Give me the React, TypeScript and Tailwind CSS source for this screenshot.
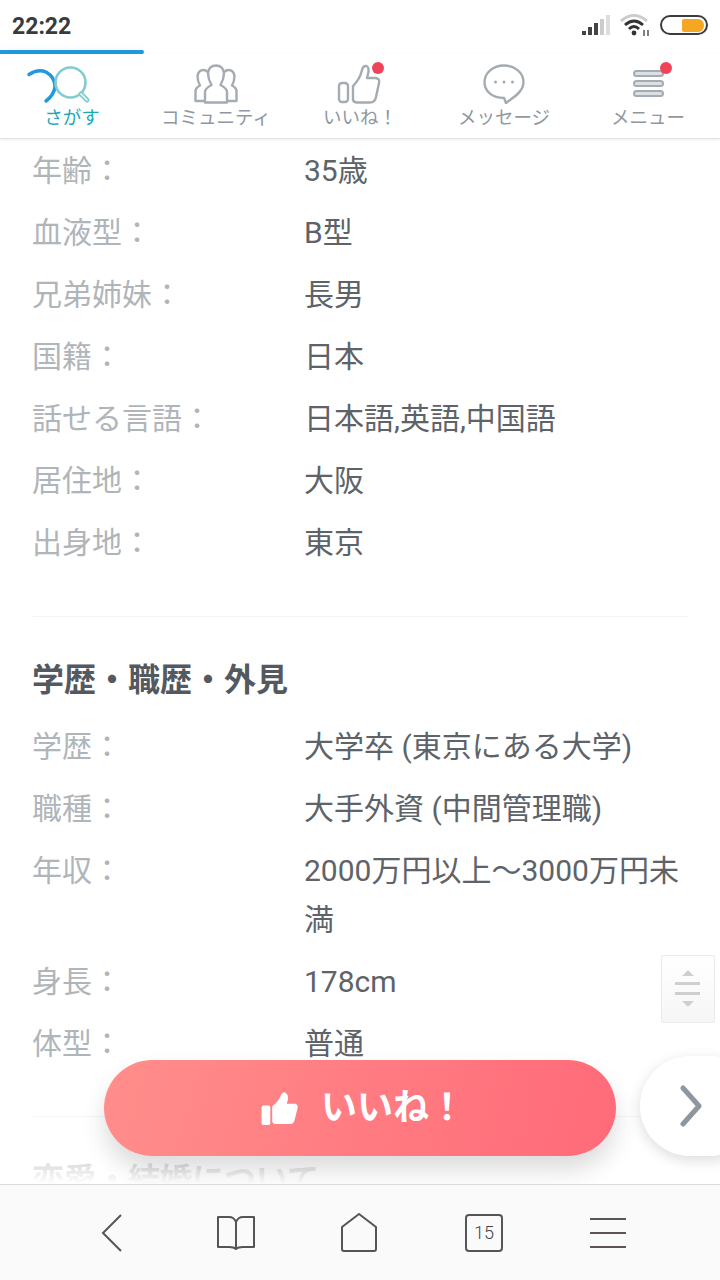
const font = { fontFamily: 'Roboto, "Noto Sans CJK JP", sans-serif' };

function Row({ label, value }: { label: string; value: string }) {
  return (
    <div className="flex mb-[13px] text-[30px] leading-[49px]">
      <div className="w-[272px] shrink-0 text-[#b0b5ba]">{label}</div>
      <div className="flex-1 text-[#5d6368]">{value}</div>
    </div>
  );
}

function NavItem({ icon, label, active }: { icon: React.ReactNode; label: string; active?: boolean }) {
  return (
    <div className="flex-1 relative flex flex-col items-center">
      <div className="h-[50px] flex items-end justify-center">{icon}</div>
      <div className={`text-[18.5px] leading-[26px] pt-[1px] whitespace-nowrap ${active ? 'text-[#1aa9b8]' : 'text-[#9097a0]'}`}>{label}</div>
    </div>
  );
}

const G = '#a5abb3';

export default function App() {
  return (
    <div style={font} className="relative w-[720px] h-[1280px] overflow-hidden bg-white flex flex-col">
      {/* status bar */}
      <div className="h-[50px] shrink-0 flex items-center justify-between pl-3 pr-3">
        <span className="text-[23px] font-bold text-[#3a3a3a] leading-none pt-[2px]">22:22</span>
        <div className="flex items-center gap-[10px]">
          <svg width="28" height="22" viewBox="0 0 28 22">
            <rect x="0" y="17" width="4" height="4" fill="#444" />
            <rect x="6" y="13" width="4" height="8" fill="#444" />
            <rect x="12" y="9" width="4" height="12" fill="#444" />
            <rect x="18" y="5" width="4" height="16" fill="#ccc" />
            <rect x="24" y="1" width="4" height="20" fill="#ddd" />
          </svg>
          <svg width="30" height="24" viewBox="0 0 30 24" fill="none">
            <path d="M1 8 Q14 -3 27 8" stroke="#ccc" strokeWidth="3" />
            <path d="M5 12 Q14 4 23 12" stroke="#333" strokeWidth="3" />
            <path d="M9 16 Q14 11 19 16" stroke="#333" strokeWidth="3" />
            <circle cx="14" cy="20" r="2.4" fill="#333" />
            <path d="M24 17v6M28 17v6" stroke="#555" strokeWidth="1.5" />
          </svg>
          <div className="w-[48px] h-[20px] rounded-full border-2 border-[#3c3c3c] flex justify-end items-center pr-[2px]">
            <div className="w-[22px] h-[13px] rounded-r-[6px] rounded-l-[2px] bg-[#f5a623]" />
          </div>
        </div>
      </div>
      {/* progress */}
      <div className="h-[4px] w-[144px] shrink-0 bg-[#2299dd] rounded-r-full shadow-[0_4px_10px_rgba(34,153,221,0.3)]" />
      {/* nav */}
      <div className="h-[85px] shrink-0 flex border-b border-[#e2e2e2] shadow-[0_1px_3px_rgba(0,0,0,0.08)] relative z-10 bg-white">
        <NavItem
          active
          label="さがす"
          icon={
            <svg width="66" height="40" viewBox="26 64 66 40" fill="none" className="mr-[26px]">
              <path d="M29 74.5 Q38 68.5 46 72 Q55 77 55 87 Q54 95 46 101" stroke="#2299dd" strokeWidth="3.5" strokeLinecap="round" />
              <circle cx="70.5" cy="82.5" r="15" stroke="#83cbcf" strokeWidth="2.6" />
              <path d="M81 94 L87 100" stroke="#83cbcf" strokeWidth="5" strokeLinecap="round" />
              <path d="M81 94 L87 100" stroke="#ffffff" strokeWidth="1.4" strokeLinecap="round" />
            </svg>
          }
        />
        <NavItem
          label="コミュニティ"
          icon={
            <svg width="44" height="40" viewBox="0 0 44 40" fill="none" stroke={G} strokeWidth="2.4" strokeLinejoin="round">
              <path d="M10 37 H1.5 V27 Q1.5 24 6 21.5 Q3.5 17 3.5 12 Q4.5 6 9.5 6 Q12 6 13.5 8" />
              <path d="M34 37 H42.5 V27 Q42.5 24 38 21.5 Q40.5 17 40.5 12 Q39.5 6 34.5 6 Q32 6 30.5 8" />
              <path d="M11 38.5 V28 Q11 24.5 17.5 21 Q14 15 14 9 Q15 1.5 22 1.5 Q29 1.5 30 9 Q30 15 26.5 21 Q33 24.5 33 28 V38.5 Z" />
            </svg>
          }
        />
        <NavItem
          label="いいね！"
          icon={
            <div className="relative">
              <svg width="46" height="40" viewBox="0 0 46 40" fill="none" stroke={G} strokeWidth="2.4" strokeLinejoin="round" className="block">
                <rect x="2" y="19" width="9" height="19" rx="3" />
                <path d="M16 22 Q23 15 25 6 Q26 1.5 29.5 2 Q32 3 31.5 8 L30 14 H39 Q43 15 42 19 L39 33 Q38 38.5 33 38.5 H20 Q17 38.5 16 36 Z" />
              </svg>
              <div className="absolute top-[-2px] left-[35px] w-3 h-3 rounded-full bg-[#f04358]" />
            </div>
          }
        />
        <NavItem
          label="メッセージ"
          icon={
            <svg width="42" height="40" viewBox="0 0 42 40" fill="none" stroke={G} strokeWidth="2.4" strokeLinejoin="round">
              <path d="M21 1.5 C32 1.5 40.5 9 40.5 18 C40.5 26 34 31 27 36 L23 39 L21 34 C9 34 1.5 27 1.5 18 C1.5 9 10 1.5 21 1.5 Z" />
              <circle cx="12.5" cy="18" r="1.5" fill={G} stroke="none" />
              <circle cx="21" cy="18" r="1.5" fill={G} stroke="none" />
              <circle cx="29.5" cy="18" r="1.5" fill={G} stroke="none" />
            </svg>
          }
        />
        <NavItem
          label="メニュー"
          icon={
            <div className="relative mb-[7px]">
              <svg width="31" height="27" viewBox="0 0 31 27" fill="#dde0e3" stroke={G} strokeWidth="2" className="block">
                <rect x="1" y="1" width="29" height="5" rx="2.5" />
                <rect x="1" y="11" width="29" height="5" rx="2.5" />
                <rect x="1" y="21" width="29" height="5" rx="2.5" />
              </svg>
              <div className="absolute -top-[8px] left-[27px] w-3 h-3 rounded-full bg-[#f04358]" />
            </div>
          }
        />
      </div>

      {/* content */}
      <div className="flex-1 overflow-hidden px-[32px] pt-[7px]">
        <Row label="年齢：" value="35歳" />
        <Row label="血液型：" value="B型" />
        <Row label="兄弟姉妹：" value="長男" />
        <Row label="国籍：" value="日本" />
        <Row label="話せる言語：" value="日本語,英語,中国語" />
        <Row label="居住地：" value="大阪" />
        <Row label="出身地：" value="東京" />
        <div className="mt-[49px] ml-[1px] border-t border-[#f2f3f4]" />
        <h2 className="mt-[40px] mb-[19px] text-[32px] leading-[46px] font-bold text-[#53595e]">学歴・職歴・外見</h2>
        <Row label="学歴：" value="大学卒 (東京にある大学)" />
        <Row label="職種：" value="大手外資 (中間管理職)" />
        <Row label="年収：" value="2000万円以上〜3000万円未満" />
        <Row label="身長：" value="178cm" />
        <Row label="体型：" value="普通" />
        <div className="mt-[48px] ml-[1px] border-t border-[#f2f3f4]" />
        <h2 className="mt-[40px] text-[32px] leading-[46px] font-bold text-[#53595e]">恋愛・結婚について</h2>
      </div>

      {/* bottom browser bar */}
      <div className="h-[96px] shrink-0 bg-[#fafafa] border-t border-[#dcdcdc] grid grid-cols-5 items-center justify-items-center px-[50px] relative z-10">
        <svg width="24" height="40" viewBox="0 0 24 40" fill="none" stroke="#555" strokeWidth="2"><path d="M21 2 L3 20 L21 38" /></svg>
        <svg width="38" height="34" viewBox="0 0 38 34" fill="none" stroke="#555" strokeWidth="2" strokeLinejoin="round"><path d="M1 1 H12 Q17 1 19 6 Q21 1 26 1 H37 V31 H26 Q21 31 19 33 Q17 31 12 31 H1 Z M19 6 V33" /></svg>
        <svg width="38" height="40" viewBox="0 0 38 40" fill="none" stroke="#555" strokeWidth="2" strokeLinejoin="round" className="mr-[2px]"><path d="M2 14 L19 1 L36 14 V36 Q36 38 34 38 H4 Q2 38 2 36 Z" /></svg>
        <div className="w-[38px] h-[38px] border-2 border-[#555] rounded-[4px] flex items-center justify-center text-[18px] font-light text-[#444] leading-none">15</div>
        <div className="w-[36px] flex flex-col gap-[12px]">
          <div className="h-[2px] bg-[#5c5555]" />
          <div className="h-[2px] bg-[#5c5555]" />
          <div className="h-[2px] bg-[#5c5555]" />
        </div>
      </div>

      {/* fade */}
      <div className="absolute left-0 right-0 bottom-[96px] h-[100px] bg-gradient-to-t from-white to-white/0 pointer-events-none" />

      {/* floating like */}
      <div className="absolute left-[104px] top-[1060px] w-[512px] h-[96px] pl-[6px] rounded-full bg-[linear-gradient(105deg,#ff8e8b,#ff6a79)] shadow-[0_14px_24px_rgba(0,0,0,0.14)] flex items-center justify-center gap-[22px] text-white font-bold text-[36px]">
        <svg width="38" height="33" viewBox="0 0 38 34" fill="white">
          <rect x="0" y="14" width="9" height="20" rx="2" />
          <path d="M11 15 Q18 9 20 3 Q22 -1 25 1 Q29 3 26 12 H35 Q38 13 37 17 L34 29 Q33 33 29 33 H15 Q11 33 11 30 Z" />
        </svg>
        <span>いいね！</span>
      </div>

      {/* next */}
      <div className="absolute left-[640px] top-[1056px] w-[120px] h-[100px] rounded-full bg-white shadow-[0_4px_14px_rgba(0,0,0,0.14)] flex items-center pl-[40px]">
        <svg width="22" height="42" viewBox="0 0 22 42" fill="none" stroke="#8f969e" strokeWidth="5" strokeLinecap="round" strokeLinejoin="round"><path d="M3 3 L19 21 L3 39" /></svg>
      </div>

      {/* scroller */}
      <div className="absolute left-[661px] top-[955px] w-[54px] h-[68px] bg-gradient-to-b from-white to-[#f6f6f6] border border-[#ebebe8] rounded-[2px] flex flex-col items-center justify-center">
        <svg width="26" height="38" viewBox="0 0 26 38" fill="#cfcfcf">
          <path d="M13 0 L19 6 H7 Z" />
          <rect x="0" y="12" width="25" height="3" />
          <rect x="0" y="22" width="25" height="3" />
          <path d="M13 37 L19 31 H7 Z" />
        </svg>
      </div>
    </div>
  );
}
